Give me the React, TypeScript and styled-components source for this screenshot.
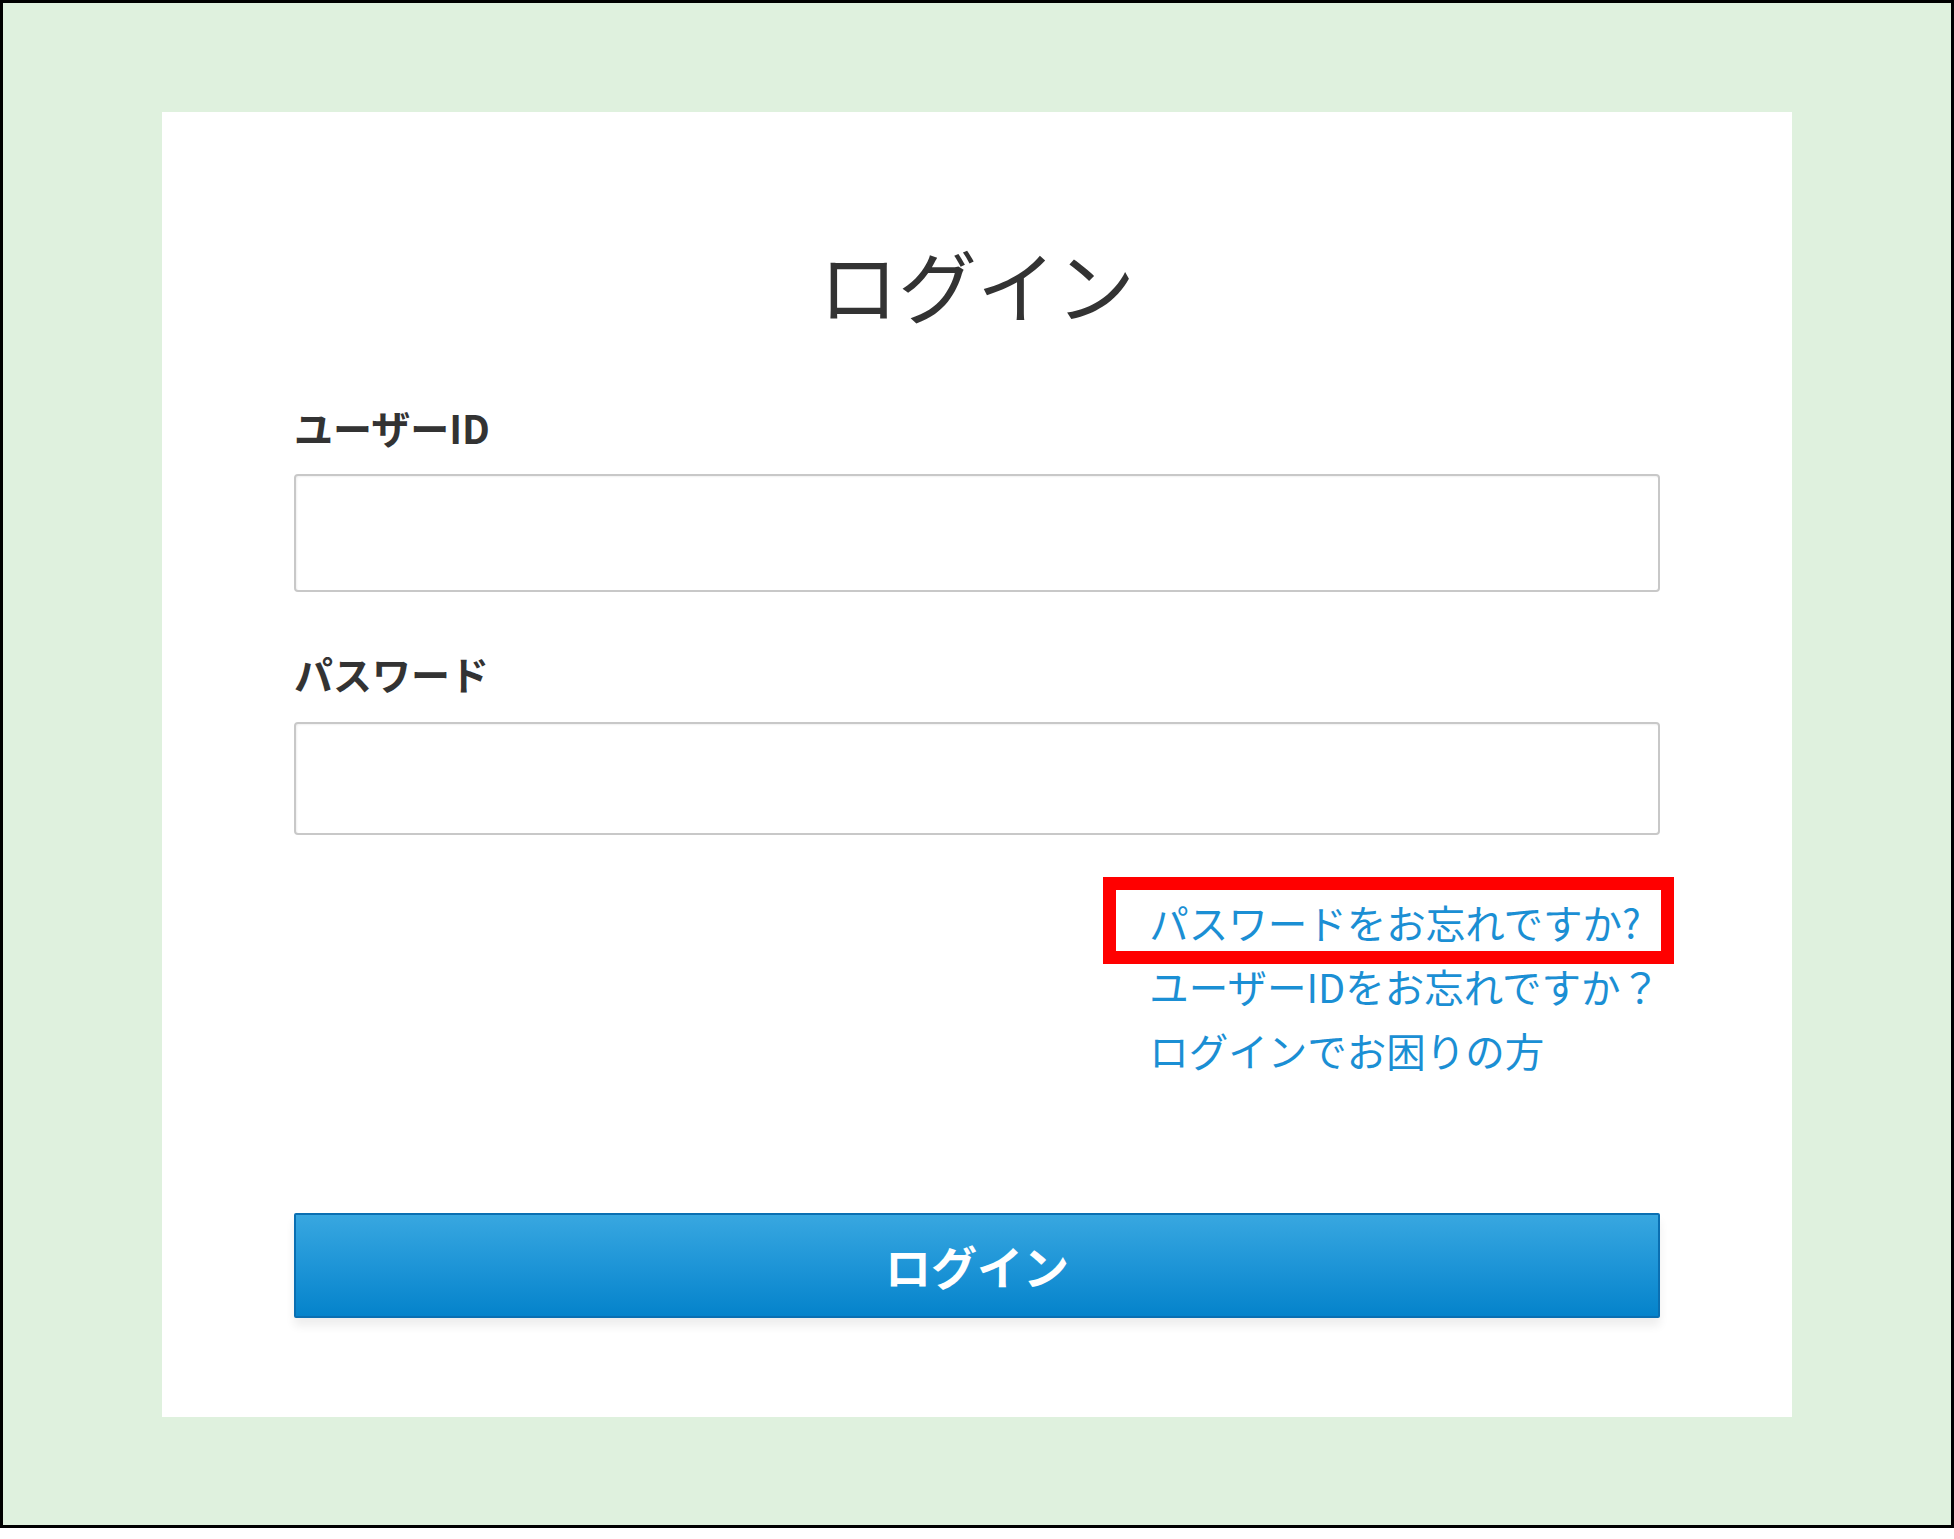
import React from 'react'
import styled, { createGlobalStyle } from 'styled-components'

const GlobalStyle = createGlobalStyle`
  html, body {
    margin: 0;
    padding: 0;
    background: #fff;
  }
  body {
    font-family: "Noto Sans CJK JP", "Noto Sans", sans-serif;
  }
`

const Frame = styled.div`
  width: 1954px;
  height: 1528px;
  box-sizing: border-box;
  border: 3px solid #000;
  background-color: #dff1de;
  display: flex;
  align-items: center;
  justify-content: center;
`

const Card = styled.div`
  width: 1630px;
  height: 1305px;
  box-sizing: border-box;
  background-color: #fff;
  padding: 127px 132px 0;
  display: flex;
  flex-direction: column;
`

const Title = styled.h1`
  margin: 0;
  font-size: 79px;
  line-height: 90px;
  font-weight: 400;
  color: #333;
  text-align: center;
`

const Label = styled.label<{ $top: number }>`
  display: block;
  margin-top: ${(p) => p.$top}px;
  font-size: 39px;
  line-height: 50px;
  font-weight: 700;
  color: #333;
`

const Input = styled.input<{ $top: number; $height: number }>`
  display: block;
  box-sizing: border-box;
  width: 100%;
  height: ${(p) => p.$height}px;
  margin-top: ${(p) => p.$top}px;
  border: 2px solid #c8c8c8;
  border-radius: 4px;
  box-shadow: inset 1px 1px 2px rgba(0, 0, 0, 0.06);
  background: #fff;
  outline: none;
`

const Links = styled.div`
  align-self: flex-end;
  margin-top: 55px;
  margin-right: 0;
  display: flex;
  flex-direction: column;
  align-items: flex-start;
`

const LinkItem = styled.a`
  position: relative;
  display: inline-block;
  font-size: 39.5px;
  line-height: 64px;
  color: #1b8fd4;
  text-decoration: none;
  white-space: nowrap;
`

const Highlight = styled.span`
  position: absolute;
  top: -13px;
  left: -46px;
  right: -33px;
  bottom: -10px;
  border: 13px solid #ff0000;
  pointer-events: none;
`

const LoginButton = styled.button`
  margin-top: 131px;
  height: 105px;
  width: 100%;
  box-sizing: border-box;
  border: 2px solid #0a6fb2;
  border-radius: 2px;
  background: linear-gradient(to bottom, #38a7e0 0%, #1e95d7 50%, #0583cb 100%);
  box-shadow: 0 8px 10px rgba(0, 0, 0, 0.07);
  color: #fff;
  font-family: "Noto Sans CJK JP", "Noto Sans", sans-serif;
  font-size: 46px;
  font-weight: 700;
  cursor: pointer;
`

export default function App() {
  return (
    <>
      <GlobalStyle />
      <Frame>
        <Card>
          <Title>ログイン</Title>
          <Label $top={73}>ユーザーID</Label>
          <Input $top={22} $height={118} type="text" />
          <Label $top={56}>パスワード</Label>
          <Input $top={24} $height={113} type="password" />
          <Links>
            <LinkItem href="#">
              パスワードをお忘れですか?
              <Highlight />
            </LinkItem>
            <LinkItem href="#">ユーザーIDをお忘れですか？</LinkItem>
            <LinkItem href="#">ログインでお困りの方</LinkItem>
          </Links>
          <LoginButton>ログイン</LoginButton>
        </Card>
      </Frame>
    </>
  )
}
